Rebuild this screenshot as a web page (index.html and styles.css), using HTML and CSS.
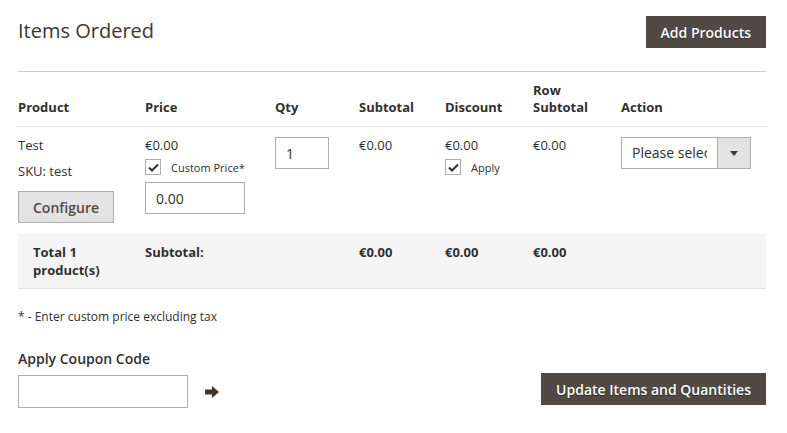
FILE: index.html
```html
<!DOCTYPE html>
<html>
<head>
    <title>Items Ordered</title>
    <link rel="stylesheet" href="styles.css">
</head>
<body>
    <div class="container">
        <div class="section-head">
            <h2 class="section-title">Items Ordered</h2>
            <button type="button" class="btn-primary">Add Products</button>
        </div>

        <table class="items-table">
            <thead>
                <tr>
                    <th class="col-product">Product</th>
                    <th class="col-price">Price</th>
                    <th class="col-qty">Qty</th>
                    <th class="col-subtotal">Subtotal</th>
                    <th class="col-discount">Discount</th>
                    <th class="col-row">Row<br>Subtotal</th>
                    <th class="col-action">Action</th>
                </tr>
            </thead>
            <tbody>
                <tr class="item-row">
                    <td>
                        <div class="line">Test</div>
                        <div class="line sku">SKU: test</div>
                        <button type="button" class="btn-secondary">Configure</button>
                    </td>
                    <td>
                        <div class="line">€0.00</div>
                        <label class="check">
                            <span class="box">
                                <svg width="11" height="9" viewBox="0 0 11 9"><path d="M1 4.5l3 3L10 1.5" fill="none" stroke="#303030" stroke-width="2"/></svg>
                            </span>
                            Custom Price*
                        </label>
                        <input type="text" class="input price-input" value="0.00">
                    </td>
                    <td>
                        <input type="text" class="input qty-input" value="1">
                    </td>
                    <td><div class="line">€0.00</div></td>
                    <td>
                        <div class="line">€0.00</div>
                        <label class="check">
                            <span class="box">
                                <svg width="11" height="9" viewBox="0 0 11 9"><path d="M1 4.5l3 3L10 1.5" fill="none" stroke="#303030" stroke-width="2"/></svg>
                            </span>
                            Apply
                        </label>
                    </td>
                    <td><div class="line">€0.00</div></td>
                    <td>
                        <div class="select">
                            <span class="select-text">Please select</span>
                            <span class="select-arrow">
                                <svg width="8" height="5" viewBox="0 0 8 5"><path d="M0 0h8L4 5z" fill="#41362f"/></svg>
                            </span>
                        </div>
                    </td>
                </tr>
            </tbody>
            <tfoot>
                <tr class="total-row">
                    <td class="total-label">Total 1<br>product(s)</td>
                    <td>Subtotal:</td>
                    <td></td>
                    <td>€0.00</td>
                    <td>€0.00</td>
                    <td>€0.00</td>
                    <td></td>
                </tr>
            </tfoot>
        </table>

        <p class="note">* - Enter custom price excluding tax</p>

        <div class="bottom-bar">
            <div class="coupon">
                <div class="coupon-title">Apply Coupon Code</div>
                <div class="coupon-field">
                    <input type="text" class="input coupon-input">
                    <svg class="coupon-arrow" width="14" height="12" viewBox="0 0 14 12"><path d="M0 3.5h7V0l7 6-7 6V8.5H0z" fill="#41362f"/></svg>
                </div>
            </div>
            <button type="button" class="btn-primary">Update Items and Quantities</button>
        </div>
    </div>
</body>
</html>
```

FILE: styles.css
```css
body {
    margin: 0;
    font-family: "Open Sans", "Noto Sans", sans-serif;
    font-size: 13px;
    color: #303030;
    background: #fff;
}

.container {
    width: 748px;
    padding: 16px 21px 0 18px;
}

/* Header with title and button */
.section-head {
    display: flex;
    justify-content: space-between;
    align-items: center;
    padding-bottom: 23px;
    border-bottom: 1px solid #cccccc;
}

.section-title {
    margin: 0 0 4px 0;
    font-size: 20px;
    font-weight: 400;
    color: #41362f;
}

.btn-primary {
    height: 32px;
    padding: 0 15px;
    border: none;
    background: #514943;
    color: #fff;
    font-family: inherit;
    font-size: 14px;
    font-weight: 600;
    text-shadow: 0 1px 1px rgba(0, 0, 0, 0.4);
}

.btn-secondary {
    display: block;
    margin-top: 10px;
    height: 32px;
    padding: 0 14px;
    border: 1px solid #adadad;
    background: #e3e3e3;
    color: #514943;
    font-family: inherit;
    font-size: 14px;
    font-weight: 600;
}

/* Items table */
.items-table {
    width: 100%;
    border-collapse: collapse;
}

.items-table th {
    text-align: left;
    vertical-align: bottom;
    font-size: 13px;
    font-weight: 700;
    line-height: 17px;
    padding: 10px 0 10px 0;
    border-bottom: 1px solid #e3e3e3;
}

.col-product { width: 127px; }
.col-price { width: 130px; }
.col-qty { width: 84px; }
.col-subtotal { width: 86px; }
.col-discount { width: 88px; }
.col-row { width: 88px; }

.item-row td {
    vertical-align: top;
    padding: 9px 0 11px 0;
}

.line {
    line-height: 19px;
}

.sku {
    margin-top: 7px;
}

.check {
    display: flex;
    align-items: center;
    margin-top: 4px;
    font-size: 11px;
    line-height: 15px;
}

.box {
    display: inline-flex;
    align-items: center;
    justify-content: center;
    width: 14px;
    height: 14px;
    border: 1px solid #adadad;
    margin-right: 10px;
    background: #fff;
}

.input {
    box-sizing: border-box;
    height: 32px;
    border: 1px solid #adadad;
    padding: 0 10px;
    font-family: inherit;
    font-size: 14px;
    color: #303030;
    background: #fff;
}

.price-input {
    display: block;
    width: 100px;
    margin-top: 7px;
}

.qty-input {
    width: 54px;
    margin-top: 1px;
}

.select {
    display: flex;
    width: 130px;
    height: 32px;
    box-sizing: border-box;
    border: 1px solid #adadad;
    margin-top: 1px;
}

.select-text {
    flex: 1;
    overflow: hidden;
    white-space: nowrap;
    padding-left: 10px;
    margin-right: 10px;
    line-height: 30px;
    font-size: 14px;
}

.select-arrow {
    width: 32px;
    display: flex;
    align-items: center;
    justify-content: center;
    background: #e3e3e3;
    border-left: 1px solid #adadad;
}

/* Totals */
.total-row td {
    background: #f5f5f5;
    font-weight: 700;
    vertical-align: top;
    line-height: 18px;
    padding: 9px 0;
    border-bottom: 1px solid #e3e3e3;
}

.total-row .total-label {
    padding-left: 15px;
}

.note {
    margin: 19px 0 0 0;
    font-size: 12px;
    color: #303030;
}

/* Coupon and update */
.bottom-bar {
    display: flex;
    justify-content: space-between;
    align-items: flex-end;
    margin-top: 24px;
}

.coupon-title {
    font-size: 14px;
    font-weight: 600;
    margin-bottom: 7px;
}

.coupon-field {
    display: flex;
    align-items: center;
}

.coupon-input {
    width: 170px;
    height: 33px;
}

.coupon-arrow {
    margin-left: 17px;
}

.bottom-bar .btn-primary {
    margin-bottom: 3px;
}
```
